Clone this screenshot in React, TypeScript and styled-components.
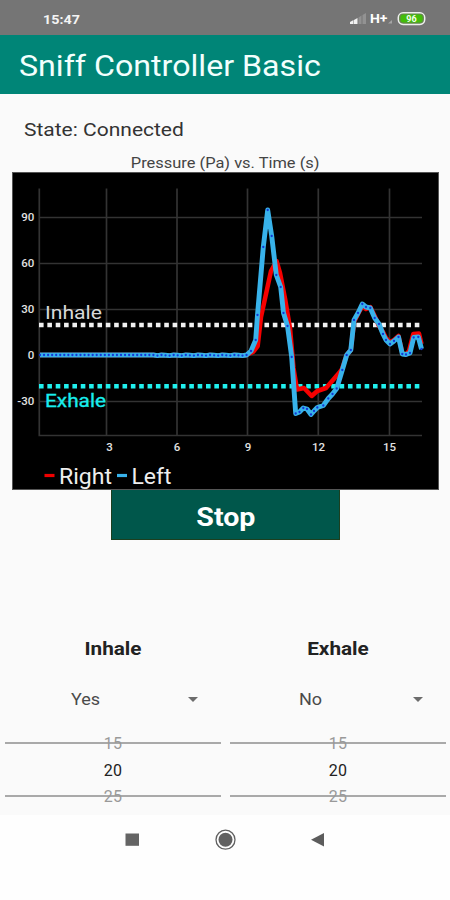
import React from "react";
import styled, { createGlobalStyle } from "styled-components";

const GlobalStyle = createGlobalStyle`
  * { box-sizing: border-box; }
  body {
    margin: 0;
    background: #fefefe;
    font-family: Roboto, "Liberation Sans", sans-serif;
  }
`;

const Screen = styled.div`
  width: 450px;
  height: 900px;
  display: flex;
  flex-direction: column;
  background: #fefefe;
  overflow: hidden;
`;

const StatusBar = styled.header`
  height: 35px;
  flex: none;
  display: flex;
  align-items: center;
  justify-content: space-between;
  padding: 3px 24px 0 43px;
  background: #757575;
  color: #f4f4f4;
`;

const Clock = styled.span`
  font-size: 13.5px;
  font-weight: 700;
  transform: scaleX(1.06);
  transform-origin: left;
`;

const Indicators = styled.svg`
  display: block;
  width: 78px;
  height: 16px;
`;

const AppBar = styled.div`
  height: 59px;
  flex: none;
  display: flex;
  align-items: center;
  padding: 3px 19px 0;
  background: #008577;
`;

const Title = styled.h1`
  margin: 0;
  font-size: 30px;
  line-height: 36px;
  font-weight: 400;
  color: #f2fffd;
  white-space: nowrap;
  transform: scaleX(1.072);
  transform-origin: left;
`;

const Content = styled.main`
  height: 721px;
  flex: none;
  display: flex;
  flex-direction: column;
  background: #fafafa;
`;

const StateText = styled.p`
  align-self: flex-start;
  margin: 24px 0 0 24px;
  font-size: 19px;
  line-height: 24px;
  color: #333;
  transform: scaleX(1.105);
  transform-origin: left;
`;

const ChartTitle = styled.h2`
  align-self: center;
  margin: 12px 0 0 1px;
  font-size: 15px;
  line-height: 18px;
  height: 18px;
  font-weight: 400;
  color: #444;
  transform: scaleX(1.095);
`;

const ChartBox = styled.svg`
  display: block;
  flex: none;
  width: 427px;
  height: 318px;
  margin-left: 12px;
  font-family: Roboto, "Liberation Sans", sans-serif;
`;

const StopButton = styled.button`
  flex: none;
  width: 229px;
  height: 50px;
  margin-left: 111px;
  padding: 4px 0 0;
  border: 1px solid #1c3f1f;
  border-top: 0;
  background: #00574b;
  color: #fff;
  font: 700 26px/34px Roboto, "Liberation Sans", sans-serif;

  span {
    display: inline-block;
    transform: scaleX(1.1);
  }
`;

const Settings = styled.section`
  display: grid;
  grid-template-columns: 1fr 1fr;
  margin-top: 95px;
`;

const Column = styled.div`
  display: flex;
  flex-direction: column;
  padding: 0 4px 0 5px;
`;

const Heading = styled.h3`
  margin: 0;
  font-size: 19px;
  line-height: 28px;
  font-weight: 700;
  text-align: center;
  color: #222;
  transform: scaleX(1.09);
`;

const Select = styled.div`
  display: grid;
  grid-template-columns: 161px 1fr;
  align-items: center;
  height: 28px;
  margin-top: 22px;
  font-size: 17px;
  text-align: center;
  color: #4a4a4a;

  span:first-child {
    transform: scaleX(1.06);
  }
`;

const Arrow = styled.span`
  width: 0;
  height: 0;
  margin-left: 22px;
  border: 5.5px solid transparent;
  border-top: 5.5px solid #6c6c6c;
  border-bottom: 0;
`;

const Picker = styled.div`
  display: grid;
  grid-template-rows: repeat(3, 26.7px);
  margin-top: 17px;
`;

const Option = styled.span<{ $selected?: boolean }>`
  display: flex;
  align-items: center;
  justify-content: center;
  font-size: 16px;
  letter-spacing: 0.2px;
  color: ${(p) => (p.$selected ? "#222" : "#999")};
  background: ${(p) =>
    p.$selected
      ? "none"
      : "linear-gradient(#a9a9a9, #a9a9a9) 0 12px / 100% 2px no-repeat"};
`;

const NavBar = styled.nav`
  flex: none;
  height: 49px;
  display: flex;
  align-items: center;
  justify-content: center;
`;

const NavIcons = styled.svg`
  display: block;
  width: 204px;
  height: 24px;
`;

type Point = [number, number];

const flat: Point[] = Array.from({ length: 52 }, (_, i) => [
  40 + i * 4.05,
  i > 28 ? 355 + (i % 3) * 0.3 : 355,
]);

const left: Point[] = [
  ...flat, [251, 351], [255.7, 340], [257.5, 315], [263.3, 247], [267.7, 210],
  [271.7, 236], [276.3, 275], [280.7, 287], [283.5, 313], [287.5, 326],
  [291.7, 357], [295.7, 413.5], [299.5, 412], [303.3, 408], [307, 409],
  [311, 414.5], [314, 411], [317.3, 407.5], [323.3, 405.5], [328.3, 398.5],
  [332.5, 394], [336.7, 388.5], [342.3, 370], [346.7, 355], [350.8, 350],
  [354, 320], [358, 313], [362.3, 304], [366, 307], [370.3, 308],
  [374.7, 318], [379, 324], [383, 334], [386, 340], [390, 344], [394, 341],
  [398.5, 337], [402.3, 354], [406, 354.5], [410, 353], [413.7, 337.5],
  [418.3, 337], [421.5, 349],
];

const right: Point[] = [
  ...flat, [253, 352], [257.7, 346], [261, 317], [271, 271], [276.5, 261],
  [280, 273], [285.3, 300], [290, 328], [293.5, 368], [297, 389.5],
  [304, 388], [311.7, 396], [317.3, 391], [326, 388], [333, 380],
  [339, 373], [342, 369], [346.7, 355], [350.8, 350], [354, 322],
  [358, 314], [362.5, 306], [366, 309], [370.3, 307], [374.7, 316],
  [379, 326], [383, 332], [386, 338], [390, 342], [394, 340], [398.5, 336],
  [402.3, 353], [406, 354.5], [409, 351], [413.3, 334], [419, 333.5], [421.5, 344],
];

const toPoints = (data: Point[]) => data.map((p) => p.join(",")).join(" ");

const xTicks = [
  { label: "3", line: 106.5, x: 109.5 },
  { label: "6", line: 177, x: 177 },
  { label: "9", line: 247.5, x: 248 },
  { label: "12", line: 318.3, x: 318.5 },
  { label: "15", line: 389.5, x: 389.5 },
];

const yTicks = [
  { label: "90", y: 217.5 },
  { label: "60", y: 263.5 },
  { label: "30", y: 309.5 },
  { label: "0", y: 355 },
  { label: "-30", y: 401.5 },
];

const PressureChart = () => (
  <ChartBox viewBox="12 172 427 318">
    <rect x="12.5" y="172.5" width="426" height="317" fill="#000" stroke="#555" />
    <g stroke="#333" strokeWidth="1.7">
      <path d="M39.3 188.5V435.5H422" fill="none" />
      {xTicks.map((t) => (
        <path key={t.label} d={`M${t.line} 188.5V435`} />
      ))}
      {yTicks.map((t) => (
        <path key={t.label} d={`M39 ${t.y}H422`} />
      ))}
    </g>
    <g fill="#e2e2e2" fontSize="11.5" fontWeight="500">
      {yTicks.map((t) => (
        <text key={t.label} x="34.3" y={t.y + 3.5} textAnchor="end">
          {t.label}
        </text>
      ))}
      {xTicks.map((t) => (
        <text key={t.label} x={t.x} y="450.5" textAnchor="middle">
          {t.label}
        </text>
      ))}
    </g>
    <g strokeWidth="4.6" strokeDasharray="4.6 3.75">
      <path d="M39 325H420" stroke="#f0f0f0" />
      <path d="M39 386.2H420" stroke="#20f0ee" />
    </g>
    <g fontSize="19">
      <text x="45" y="318.5" fill="#d8d8d8" textLength="57" lengthAdjust="spacingAndGlyphs">
        Inhale
      </text>
      <text
        x="45"
        y="407"
        fill="#18eeee"
        stroke="#18eeee"
        strokeWidth="0.3"
        textLength="61"
        lengthAdjust="spacingAndGlyphs"
      >
        Exhale
      </text>
    </g>
    <g fill="none" strokeLinejoin="round">
      <polyline points={toPoints(right)} stroke="#f60000" strokeWidth="4.5" />
      <polyline points={toPoints(left)} stroke="#38b2ea" strokeWidth="4.9" />
    </g>
    <g fill="#1238d8">
      {left.map(([x, y], i) => (
        <circle key={i} cx={x} cy={y} r="1.15" />
      ))}
    </g>
    <path d="M44.5 475.5H54.5" stroke="#f00000" strokeWidth="3.2" />
    <path d="M117 475.5H127" stroke="#38b2ea" strokeWidth="3.2" />
    <g fill="#eee" fontSize="22">
      <text x="59" y="484" textLength="53" lengthAdjust="spacingAndGlyphs">
        Right
      </text>
      <text x="131.5" y="484" textLength="40" lengthAdjust="spacingAndGlyphs">
        Left
      </text>
    </g>
  </ChartBox>
);

const StatusIcons = () => (
  <Indicators viewBox="348 11 78 16">
    <path d="M350 24V22L353.5 20V24ZM354 24V20L357.5 18V24Z" fill="#f2f2f2" />
    <path d="M358.5 24V17.5L361.5 15.5V24ZM362.5 24V15L366 13V24Z" fill="#929292" />
    <text
      x="370"
      y="23.2"
      fill="#fff"
      fontSize="12"
      fontWeight="700"
      textLength="17.5"
      lengthAdjust="spacingAndGlyphs"
    >
      H+
    </text>
    <path d="M388 23.5L392 20V23.5Z" fill="#a5a5a5" />
    <rect x="398.3" y="12.8" width="26.4" height="11.6" rx="4.8" fill="#65864f" stroke="#eee" strokeWidth="1.5" />
    <rect x="400.5" y="14.6" width="22" height="8" rx="3" fill="#43bd09" />
    <text x="411.5" y="21.8" fill="#f5fff0" fontSize="9" fontWeight="700" textAnchor="middle">
      96
    </text>
  </Indicators>
);

const Setting = ({ name, value }: { name: string; value: string }) => (
  <Column>
    <Heading>{name}</Heading>
    <Select>
      <span>{value}</span>
      <Arrow />
    </Select>
    <Picker>
      <Option>15</Option>
      <Option $selected>20</Option>
      <Option>25</Option>
    </Picker>
  </Column>
);

export default function App() {
  return (
    <>
      <GlobalStyle />
      <Screen>
        <StatusBar>
          <Clock>15:47</Clock>
          <StatusIcons />
        </StatusBar>
        <AppBar>
          <Title>Sniff Controller Basic</Title>
        </AppBar>
        <Content>
          <StateText>State: Connected</StateText>
          <ChartTitle>Pressure (Pa) vs. Time (s)</ChartTitle>
          <PressureChart />
          <StopButton>
            <span>Stop</span>
          </StopButton>
          <Settings>
            <Setting name="Inhale" value="Yes" />
            <Setting name="Exhale" value="No" />
          </Settings>
        </Content>
        <NavBar>
          <NavIcons viewBox="123 828 204 24">
            <rect x="125.5" y="833.5" width="13.5" height="12.3" fill="#646464" />
            <circle cx="225.5" cy="839.7" r="9.5" fill="none" stroke="#606060" strokeWidth="1.3" />
            <circle cx="225.5" cy="839.7" r="7" fill="#606060" />
            <path d="M311 839.7L324 833V846.4Z" fill="#5c5c5c" />
          </NavIcons>
        </NavBar>
      </Screen>
    </>
  );
}
